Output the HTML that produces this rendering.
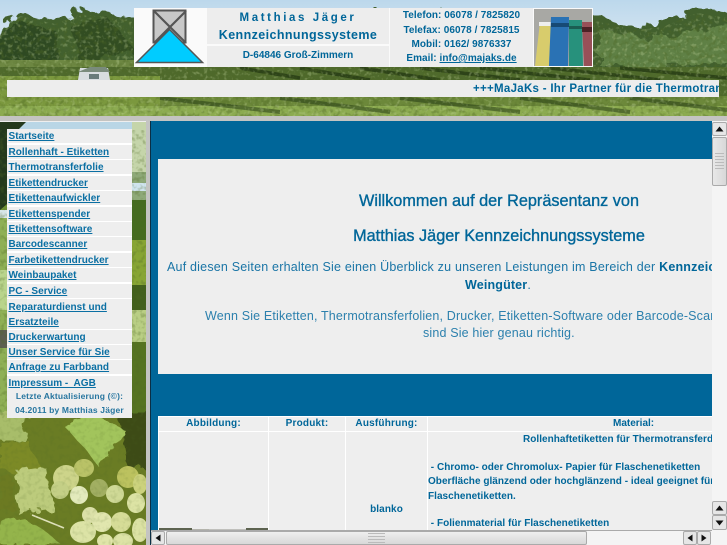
<!DOCTYPE html>
<html lang="de"><head><meta charset="utf-8"><title>Matthias Jäger Kennzeichnungssysteme</title>
<style>
html,body{margin:0;padding:0;width:727px;height:545px;overflow:hidden;background:#eee}
body{position:relative;font-family:"Liberation Sans",sans-serif;color:#006699}
.a{position:absolute}
.t{position:absolute;white-space:nowrap;font-weight:bold;font-size:10px;line-height:14px;text-align:center;overflow:hidden}
.m{position:absolute;left:7px;width:125px;height:14.4px;background:#eee;font-weight:bold;font-size:10px;line-height:14px;white-space:nowrap;padding-left:1.5px;box-sizing:border-box;letter-spacing:.03px;color:#0a6fa3}
.m span{position:relative;top:1px;display:inline-block}
.m u{text-decoration:underline}
.r{position:absolute;white-space:nowrap;font-size:12.5px;line-height:16px;overflow:hidden}
.b{position:absolute;background:#e6e6e6;border:1px solid #aaa;box-sizing:border-box;border-radius:2px}
</style></head><body>
<svg class="a" style="left:0;top:0" width="727" height="545" viewBox="0 0 727 545">
<defs>
<linearGradient id="s" x1="0" y1="0" x2="0" y2="1"><stop offset="0" stop-color="#bcd8ec"/><stop offset=".5" stop-color="#dfeaf2"/></linearGradient>
<filter id="d" x="-5%" y="-5%" width="110%" height="110%"><feTurbulence type="fractalNoise" baseFrequency=".07" numOctaves="3" seed="3" result="t"/><feDisplacementMap in="SourceGraphic" in2="t" scale="16"/></filter>
<filter id="dk" x="0" y="0" width="100%" height="100%"><feTurbulence type="fractalNoise" baseFrequency=".22" numOctaves="2" seed="5"/><feColorMatrix values="0 0 0 0 .08 0 0 0 0 .14 0 0 0 0 .02 4 0 0 0 -1.9"/></filter>
<filter id="lt" x="0" y="0" width="100%" height="100%"><feTurbulence type="fractalNoise" baseFrequency=".25" numOctaves="2" seed="11"/><feColorMatrix values="0 0 0 0 .6 0 0 0 0 .72 0 0 0 0 .38 4 0 0 0 -2.1"/></filter>
<clipPath id="h"><rect width="727" height="116"/></clipPath>
<clipPath id="l"><rect y="122" width="146" height="423"/></clipPath>
<clipPath id="g"><path d="M0 34L20 16L55 24L80 14L133 20L133 60H590L590 20L640 30L665 26L697 13L727 18V116H0Z"/></clipPath>
</defs>
<g clip-path="url(#h)">
<rect width="727" height="116" fill="url(#s)"/>
<g filter="url(#d)">
<path d="M-20 40L0 34L20 12L55 22L80 10L133 18L260 12L540 12L600 16L640 28L665 22L697 9L740 14L740 80H-20Z" fill="#42602d"/>
<path d="M-20 50L20 20L55 30L60 64H-20Z" fill="#2e4a22"/>
<path d="M70 24L110 20L135 50L80 62Z" fill="#324e24"/>
<path d="M600 30L650 40L727 24L740 66H600Z" fill="#5f8044"/>
</g>
<rect y="60" width="170" height="20" fill="#6d8742"/>
<rect y="67" width="727" height="49" fill="#4f6a2c"/>
<rect y="76" width="160" height="40" fill="#7b983e"/>
<rect x="160" y="96" width="567" height="20" fill="#6c883a"/>
<rect y="106" width="727" height="10" fill="#8cab50"/>
<g stroke="#243a14" stroke-width="3.500" fill="none" opacity=".8">
<path d="M240 68L300 78M300 68L370 80M360 68L440 80M420 68L520 80M480 68L590 80M550 68L660 80M620 68L727 78"/>
</g>
<g stroke="#243a14" stroke-width="4" fill="none" opacity=".55">
<path d="M160 98L280 112M280 98L390 112M400 98L520 112M520 98L630 112M630 98L727 110"/>
</g>
<g clip-path="url(#g)">
<rect width="727" height="116" filter="url(#dk)" opacity=".4"/>
<rect width="727" height="116" filter="url(#lt)" opacity=".3"/>
</g>
<path d="M80 68L108 68L110 80L78 80Z" fill="#d8dde0"/><path d="M78 72L90 67L106 67L110 72Z" fill="#7a8b7c"/>
<rect x="89" y="74" width="10" height="5" fill="#687a7a"/>
</g>
<g clip-path="url(#l)">
<rect y="122" width="146" height="423" fill="#6f8f34"/>
<rect y="122" width="146" height="8" fill="#b9d6e6"/>
<path d="M0 122H26L18 130H7V204L0 210Z" fill="#24391c"/>
<rect x="0" y="210" width="7" height="8" fill="#d7e6e8"/>
<rect x="0" y="218" width="7" height="200" fill="#8fb055"/>
<rect x="0" y="270" width="7" height="40" fill="#b9d48c"/>
<rect x="0" y="330" width="7" height="18" fill="#5c5f50"/>
<rect x="132" y="122" width="14" height="50" fill="#c5d5aa"/>
<rect x="132" y="172" width="14" height="28" fill="#8ea978"/>
<rect x="132" y="183" width="14" height="8" fill="#cfe4ee"/>
<rect x="132" y="200" width="14" height="40" fill="#456c20"/>
<rect x="132" y="240" width="14" height="45" fill="#87a534"/>
<rect x="132" y="285" width="14" height="25" fill="#42601c"/>
<rect x="132" y="310" width="14" height="32" fill="#b9ce84"/>
<rect x="132" y="342" width="14" height="76" fill="#557321"/>
<rect y="418" width="146" height="127" fill="#6a7c24"/>
<g filter="url(#d)">
<path d="M-10 412H28L24 440H-10Z" fill="#a8bd6a"/>
<path d="M118 412H150V470H128Z" fill="#3d4c14"/>
<path d="M66 428L90 412L125 430L100 468L88 452Z" fill="#a2c45c"/>
<path d="M0 442L28 440L42 470L20 476L0 470Z" fill="#7c8a26"/>
<path d="M16 470L44 466L52 510L18 514Z" fill="#bccb7c"/>
<path d="M-10 525L28 518L62 545H-10Z" fill="#94b44c"/>
<path d="M0 478H14V512H0Z" fill="#6c7a20"/>
</g>
<ellipse cx="66" cy="478" rx="13" ry="13" fill="#cdd48a"/>
<ellipse cx="84" cy="468" rx="10" ry="9" fill="#b9c267"/>
<ellipse cx="60" cy="490" rx="9" ry="9" fill="#c4cf86"/>
<ellipse cx="79" cy="495" rx="9" ry="9" fill="#e3eabc"/>
<ellipse cx="99" cy="488" rx="9" ry="9" fill="#a2af62"/>
<ellipse cx="115" cy="494" rx="9" ry="9" fill="#cfd996"/>
<ellipse cx="128" cy="477" rx="11" ry="11" fill="#bcc25f"/>
<ellipse cx="140" cy="484" rx="7" ry="10" fill="#ccd27d"/>
<ellipse cx="136" cy="503" rx="9" ry="10" fill="#dce3a4"/>
<ellipse cx="90" cy="515" rx="8" ry="8" fill="#dbe0a8"/>
<ellipse cx="102" cy="522" rx="10" ry="10" fill="#e1e6ae"/>
<ellipse cx="121" cy="522" rx="10" ry="10" fill="#d6dc97"/>
<ellipse cx="83" cy="532" rx="13" ry="11" fill="#dce3a6"/>
<ellipse cx="105" cy="541" rx="8" ry="7" fill="#e0e5a9"/>
<ellipse cx="123" cy="541" rx="10" ry="8" fill="#dde3a6"/>
<ellipse cx="140" cy="530" rx="8" ry="12" fill="#dce2a4"/>
<path d="M32 515L64 528" stroke="#dfe2bc" stroke-width="1.500"/>
<rect y="130" width="146" height="288" filter="url(#dk)" opacity=".3"/>
<rect y="418" width="146" height="127" filter="url(#dk)" opacity=".12"/>
</g>
</svg>

<!-- Header blocks -->
<div class="a" style="left:134px;top:8px;width:459px;height:59px;background:#fafafa"></div>
<svg class="a" style="left:134px;top:8px" width="72" height="59" viewBox="0 0 72 59">
<rect x="19.500" y="2.500" width="32" height="32" fill="#c8c8c8" stroke="#555" stroke-width="2"/>
<path d="M20 3L52 35M52 3L20 35" stroke="#555" stroke-width="2.200"/>
<path d="M35.500 21.500L68.500 54.500H2.500Z" fill="#00ccff" stroke="#555" stroke-width="1.500"/>
</svg>
<div class="a" style="left:207px;top:8px;width:182px;height:36px;background:#ededed"></div>
<div class="a" style="left:207px;top:46px;width:182px;height:21px;background:#ededed"></div>
<div class="a" style="left:390px;top:8px;width:143px;height:59px;background:#ededed"></div>
<div class="t" style="left:207px;top:11px;width:182px;font-size:11.500px;letter-spacing:2.600px;line-height:15px">Matthias Jäger</div>
<div class="t" style="left:207px;top:28px;width:182px;font-size:12.500px;letter-spacing:.4px;line-height:15px">Kennzeichnungssysteme</div>
<div class="t" style="left:207px;top:49px;width:182px;font-size:10px;line-height:14px">D-64846 Groß-Zimmern</div>
<div class="t" style="left:390px;top:9px;width:143px;letter-spacing:.05px">Telefon: 06078 / 7825820</div>
<div class="t" style="left:390px;top:24px;width:143px;letter-spacing:.05px">Telefax: 06078 / 7825815</div>
<div class="t" style="left:390px;top:38px;width:143px;letter-spacing:.05px">Mobil: 0162/ 9876337</div>
<div class="t" style="left:390px;top:52px;width:143px;letter-spacing:.05px">Email: <u>info@majaks.de</u></div>
<svg class="a" style="left:534px;top:8px" width="59" height="59" viewBox="0 0 59 59">
<rect width="59" height="59" fill="#fafafa"/>
<rect x="0" y="1" width="58" height="57" fill="#a8a8a4"/>
<path d="M6 14H17L15 58H1Z" fill="#d8cc6c"/>
<rect x="5" y="14" width="12" height="4" fill="#eeeeee"/>
<path d="M17 9H35L34 58H15Z" fill="#2a72b4"/>
<rect x="17" y="15" width="18" height="4" fill="#174a75"/>
<path d="M35 12H48L49 58H35Z" fill="#27917c"/>
<rect x="35" y="18" width="13" height="3" fill="#1b5e52"/>
<path d="M48 14H58V58H50Z" fill="#985058"/>
<rect x="48" y="19" width="10" height="5" fill="#4c2226"/>
</svg>

<!-- Marquee -->
<div class="a" style="left:7px;top:80px;width:712px;height:17px;background:#ededed"></div>
<div class="t" style="left:473px;top:82px;width:246px;text-align:left;font-size:11.500px;letter-spacing:.29px;line-height:15px">+++MaJaKs - Ihr Partner für die Thermotransfer</div>

<!-- Frame bars -->
<div class="a" style="left:0;top:116px;width:727px;height:5px;background:#c4c4c2"></div>
<div class="a" style="left:146px;top:116px;width:4px;height:429px;background:#c4c4c2"></div>
<div class="a" style="left:150px;top:121px;width:1px;height:424px;background:#0b2f45"></div>

<!-- Menu -->
<div class="a" style="left:7px;top:129px;width:125px;height:289px;background:#fff"></div>
<div class="m" style="top:129px"><span><u>Startseite</u></span></div>
<div class="m" style="top:144.500px"><span><u>Rollenhaft - Etiketten</u></span></div>
<div class="m" style="top:160px"><span><u>Thermotransferfolie</u></span></div>
<div class="m" style="top:175.500px"><span><u>Etikettendrucker</u></span></div>
<div class="m" style="top:191px"><span><u>Etikettenaufwickler</u></span></div>
<div class="m" style="top:206.500px"><span><u>Etikettenspender</u></span></div>
<div class="m" style="top:222px"><span><u>Etikettensoftware</u></span></div>
<div class="m" style="top:237px"><span><u>Barcodescanner</u></span></div>
<div class="m" style="top:252.500px"><span><u>Farbetikettendrucker</u></span></div>
<div class="m" style="top:268px"><span><u>Weinbaupaket</u></span></div>
<div class="m" style="top:283.500px"><span><u>PC - Service</u></span></div>
<div class="m" style="top:299px;height:30px;line-height:15px"><span><u>Reparaturdienst und<br>Ersatzteile</u></span></div>
<div class="m" style="top:329.500px"><span><u>Druckerwartung</u></span></div>
<div class="m" style="top:345px"><span><u>Unser Service für Sie</u></span></div>
<div class="m" style="top:360px"><span><u>Anfrage zu Farbband</u></span></div>
<div class="m" style="top:375.500px"><span><u>Impressum -&nbsp; AGB</u></span></div>
<div class="t" style="left:7px;top:389px;width:125px;height:29px;background:#eee;font-size:8.500px;line-height:14.300px;letter-spacing:.17px;color:#26759f">Letzte Aktualisierung (©):<br>04.2011 by Matthias Jäger</div>

<!-- Main -->
<div class="a" style="left:151px;top:121px;width:561px;height:410px;background:#006699"></div>
<div class="a" style="left:158px;top:159px;width:554px;height:215px;background:#eeeeee"></div>
<div class="t" style="left:159px;top:192px;width:680px;font-size:16.250px;line-height:18px;font-weight:normal;-webkit-text-stroke:.35px #006699">Willkommen auf der Repräsentanz von</div>
<div class="t" style="left:159px;top:227px;width:680px;font-size:16.250px;line-height:18px;font-weight:normal;-webkit-text-stroke:.35px #006699">Matthias Jäger Kennzeichnungssysteme</div>
<div class="r" style="left:167px;top:259px;width:545px;letter-spacing:.2px;color:#1a75a6">Auf diesen Seiten erhalten Sie einen Überblick zu unseren Leistungen im Bereich der <b style="color:#006699">Kennzeichnung für</b></div>
<div class="r" style="left:465px;top:277px;width:247px;letter-spacing:.16px;color:#1a75a6"><b style="color:#006699">Weingüter</b>.</div>
<div class="r" style="left:205px;top:308px;width:507px;letter-spacing:.16px;color:#2c80ad">Wenn Sie Etiketten, Thermotransferfolien, Drucker, Etiketten-Software oder Barcode-Scanner suchen,</div>
<div class="r" style="left:423px;top:325px;width:289px;letter-spacing:.16px;color:#2c80ad">sind Sie hier genau richtig.</div>

<!-- Table -->
<div class="a" style="left:158px;top:416px;width:554px;height:115px;background:#fff"></div>
<div class="a" style="left:159px;top:417px;width:109px;height:14px;background:#eee"></div>
<div class="a" style="left:269px;top:417px;width:76px;height:14px;background:#eee"></div>
<div class="a" style="left:346px;top:417px;width:81px;height:14px;background:#eee"></div>
<div class="a" style="left:428px;top:417px;width:284px;height:14px;background:#eee"></div>
<div class="a" style="left:159px;top:432px;width:109px;height:99px;background:#eee"></div>
<div class="a" style="left:269px;top:432px;width:76px;height:99px;background:#eee"></div>
<div class="a" style="left:346px;top:432px;width:81px;height:99px;background:#eee"></div>
<div class="a" style="left:428px;top:432px;width:284px;height:99px;background:#eee"></div>
<div class="a" style="left:159px;top:528px;width:33px;height:3px;background:#5d6350"></div>
<div class="a" style="left:192px;top:529px;width:17px;height:2px;background:#b4b4ac"></div>
<div class="a" style="left:209px;top:529px;width:37px;height:2px;background:#c0c0bc"></div>
<div class="a" style="left:246px;top:528px;width:22px;height:3px;background:#5d6350"></div>
<div class="t" style="left:159px;top:417px;width:109px;letter-spacing:.2px">Abbildung:</div>
<div class="t" style="left:269px;top:417px;width:76px;letter-spacing:.2px">Produkt:</div>
<div class="t" style="left:346px;top:417px;width:81px;letter-spacing:.2px">Ausführung:</div>
<div class="t" style="left:613px;top:417px;width:60px;text-align:left">Material:</div>
<div class="t" style="left:346px;top:503px;width:81px;letter-spacing:.1px">blanko</div>
<div class="t" style="left:523px;top:433px;width:189px;text-align:left;letter-spacing:.03px">Rollenhaftetiketten für Thermotransferdruck</div>
<div class="t" style="left:428px;top:461px;width:284px;text-align:left;letter-spacing:.03px">&nbsp;- Chromo- oder Chromolux- Papier für Flaschenetiketten</div>
<div class="t" style="left:428px;top:475px;width:284px;text-align:left;letter-spacing:.03px">Oberfläche glänzend oder hochglänzend - ideal geeignet für</div>
<div class="t" style="left:428px;top:490px;width:284px;text-align:left;letter-spacing:.03px">Flaschenetiketten.</div>
<div class="t" style="left:428px;top:517px;width:284px;height:14px;text-align:left;letter-spacing:.03px">&nbsp;- Folienmaterial für Flaschenetiketten</div>

<!-- Vertical scrollbar -->
<div class="a" style="left:712px;top:121px;width:15px;height:424px;background:#f4f4f4"></div>
<div class="b" style="left:712px;top:122px;width:15px;height:14px"></div>
<svg class="a" style="left:712px;top:122px" width="15" height="14"><path d="M3.500 9.500L7.500 4.500L11.500 9.500Z" fill="#111"/></svg>
<div class="b" style="left:712px;top:137px;width:15px;height:49px;background:linear-gradient(90deg,#e8e8e8,#d8d8d8)"></div>
<div class="a" style="left:715px;top:153px;width:9px;height:16px;background:repeating-linear-gradient(0deg,#bbb 0 1px,transparent 1px 3px)"></div>
<div class="b" style="left:712px;top:501px;width:15px;height:14px"></div>
<svg class="a" style="left:712px;top:501px" width="15" height="14"><path d="M3.500 9.500L7.500 4.500L11.500 9.500Z" fill="#111"/></svg>
<div class="b" style="left:712px;top:515px;width:15px;height:15px"></div>
<svg class="a" style="left:712px;top:515px" width="15" height="15"><path d="M3.500 5.500L7.500 10.500L11.500 5.500Z" fill="#111"/></svg>

<!-- Horizontal scrollbar -->
<div class="a" style="left:151px;top:530px;width:561px;height:15px;background:#f4f4f4;border-top:1px solid #aaa;box-sizing:border-box"></div>
<div class="b" style="left:151px;top:531px;width:14px;height:14px"></div>
<svg class="a" style="left:151px;top:531px" width="14" height="14"><path d="M9.500 3.500L4.500 7L9.500 10.500Z" fill="#111"/></svg>
<div class="b" style="left:166px;top:531px;width:421px;height:14px;background:linear-gradient(#efefef,#d8d8d8)"></div>
<div class="a" style="left:368px;top:533px;width:17px;height:10px;background:repeating-linear-gradient(0deg,#bbb 0 1px,transparent 1px 3px)"></div>
<div class="b" style="left:683px;top:531px;width:14px;height:14px"></div>
<svg class="a" style="left:683px;top:531px" width="14" height="14"><path d="M9.500 3.500L4.500 7L9.500 10.500Z" fill="#111"/></svg>
<div class="b" style="left:697px;top:531px;width:14px;height:14px"></div>
<svg class="a" style="left:697px;top:531px" width="14" height="14"><path d="M4.500 3.500L9.500 7L4.500 10.500Z" fill="#111"/></svg>
</body></html>
